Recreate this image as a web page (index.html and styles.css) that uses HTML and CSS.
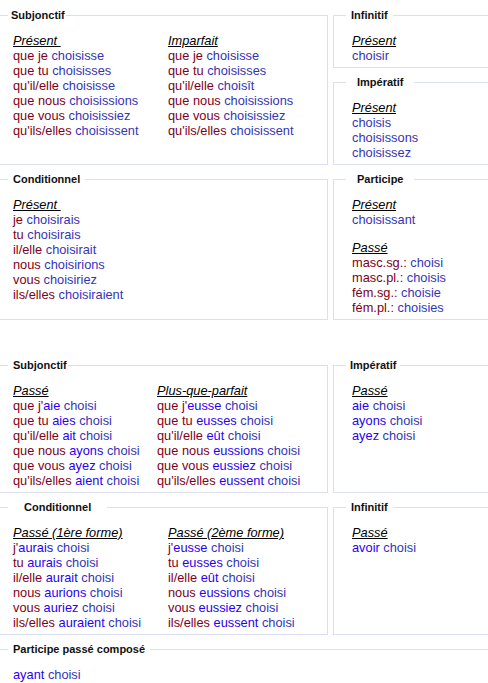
FILE: index.html
```html
<!DOCTYPE html>
<html lang="fr">
<head>
  <meta charset="UTF-8">
  <meta name="viewport" content="width=device-width, initial-scale=1.0">
  <title>Conjugaison : choisir</title>
  <link rel="stylesheet" href="styles.css">
</head>
<body>

  <!-- Temps simples -->
  <div class="block">
    <fieldset class="box box-left">
      <legend class="lg-s">Subjonctif</legend>
      <div class="cols">
        <div class="tense">
          <div class="tense-name">Présent&nbsp;</div>
          <div><span class="pr">que je</span> <span class="vb">choisisse</span></div>
          <div><span class="pr">que tu</span> <span class="vb">choisisses</span></div>
          <div><span class="pr">qu'il/elle</span> <span class="vb">choisisse</span></div>
          <div><span class="pr">que nous</span> <span class="vb">choisissions</span></div>
          <div><span class="pr">que vous</span> <span class="vb">choisissiez</span></div>
          <div><span class="pr">qu'ils/elles</span> <span class="vb">choisissent</span></div>
        </div>
        <div class="tense">
          <div class="tense-name">Imparfait</div>
          <div><span class="pr">que je</span> <span class="vb">choisisse</span></div>
          <div><span class="pr">que tu</span> <span class="vb">choisisses</span></div>
          <div><span class="pr">qu'il/elle</span> <span class="vb">choisît</span></div>
          <div><span class="pr">que nous</span> <span class="vb">choisissions</span></div>
          <div><span class="pr">que vous</span> <span class="vb">choisissiez</span></div>
          <div><span class="pr">qu'ils/elles</span> <span class="vb">choisissent</span></div>
        </div>
      </div>
    </fieldset>

    <div class="stack">
      <fieldset class="box">
        <legend class="lg-m">Infinitif</legend>
        <div class="tense-name">Présent</div>
        <div><span class="vb">choisir</span></div>
      </fieldset>
      <fieldset class="box">
        <legend class="lg-l">Impératif</legend>
        <div class="tense-name">Présent</div>
        <div><span class="vb">choisis</span></div>
        <div><span class="vb">choisissons</span></div>
        <div><span class="vb">choisissez</span></div>
      </fieldset>
    </div>

    <fieldset class="box box-left">
      <legend class="lg-m">Conditionnel</legend>
      <div class="tense-name">Présent&nbsp;</div>
      <div><span class="pr">je</span> <span class="vb">choisirais</span></div>
      <div><span class="pr">tu</span> <span class="vb">choisirais</span></div>
      <div><span class="pr">il/elle</span> <span class="vb">choisirait</span></div>
      <div><span class="pr">nous</span> <span class="vb">choisirions</span></div>
      <div><span class="pr">vous</span> <span class="vb">choisiriez</span></div>
      <div><span class="pr">ils/elles</span> <span class="vb">choisiraient</span></div>
    </fieldset>

    <fieldset class="box">
      <legend class="lg-l">Participe</legend>
      <div class="tense-name">Présent</div>
      <div><span class="vb">choisissant</span></div>
      <div class="tense-name spaced">Passé</div>
      <div><span class="pr">masc.sg.:</span> <span class="vb">choisi</span></div>
      <div><span class="pr">masc.pl.:</span> <span class="vb">choisis</span></div>
      <div><span class="pr">fém.sg.:</span> <span class="vb">choisie</span></div>
      <div><span class="pr">fém.pl.:</span> <span class="vb">choisies</span></div>
    </fieldset>
  </div>

  <!-- Temps composés -->
  <div class="block block-second">
    <fieldset class="box box-left">
      <legend class="lg-s2">Subjonctif</legend>
      <div class="cols cols-narrow">
        <div class="tense">
          <div class="tense-name">Passé</div>
          <div><span class="pr">que j'</span><span class="aux">aie</span> <span class="vb">choisi</span></div>
          <div><span class="pr">que tu</span> <span class="aux">aies</span> <span class="vb">choisi</span></div>
          <div><span class="pr">qu'il/elle</span> <span class="aux">ait</span> <span class="vb">choisi</span></div>
          <div><span class="pr">que nous</span> <span class="aux">ayons</span> <span class="vb">choisi</span></div>
          <div><span class="pr">que vous</span> <span class="aux">ayez</span> <span class="vb">choisi</span></div>
          <div><span class="pr">qu'ils/elles</span> <span class="aux">aient</span> <span class="vb">choisi</span></div>
        </div>
        <div class="tense">
          <div class="tense-name">Plus-que-parfait</div>
          <div><span class="pr">que j'</span><span class="aux">eusse</span> <span class="vb">choisi</span></div>
          <div><span class="pr">que tu</span> <span class="aux">eusses</span> <span class="vb">choisi</span></div>
          <div><span class="pr">qu'il/elle</span> <span class="aux">eût</span> <span class="vb">choisi</span></div>
          <div><span class="pr">que nous</span> <span class="aux">eussions</span> <span class="vb">choisi</span></div>
          <div><span class="pr">que vous</span> <span class="aux">eussiez</span> <span class="vb">choisi</span></div>
          <div><span class="pr">qu'ils/elles</span> <span class="aux">eussent</span> <span class="vb">choisi</span></div>
        </div>
      </div>
    </fieldset>

    <fieldset class="box">
      <legend class="lg-s3">Impératif</legend>
      <div class="tense-name">Passé</div>
      <div><span class="aux">aie</span> <span class="vb">choisi</span></div>
      <div><span class="aux">ayons</span> <span class="vb">choisi</span></div>
      <div><span class="aux">ayez</span> <span class="vb">choisi</span></div>
    </fieldset>

    <fieldset class="box box-left">
      <legend class="lg-xl">Conditionnel</legend>
      <div class="cols">
        <div class="tense">
          <div class="tense-name">Passé (1ère forme)</div>
          <div><span class="pr">j'</span><span class="aux">aurais</span> <span class="vb">choisi</span></div>
          <div><span class="pr">tu</span> <span class="aux">aurais</span> <span class="vb">choisi</span></div>
          <div><span class="pr">il/elle</span> <span class="aux">aurait</span> <span class="vb">choisi</span></div>
          <div><span class="pr">nous</span> <span class="aux">aurions</span> <span class="vb">choisi</span></div>
          <div><span class="pr">vous</span> <span class="aux">auriez</span> <span class="vb">choisi</span></div>
          <div><span class="pr">ils/elles</span> <span class="aux">auraient</span> <span class="vb">choisi</span></div>
        </div>
        <div class="tense">
          <div class="tense-name">Passé (2ème forme)</div>
          <div><span class="pr">j'</span><span class="aux">eusse</span> <span class="vb">choisi</span></div>
          <div><span class="pr">tu</span> <span class="aux">eusses</span> <span class="vb">choisi</span></div>
          <div><span class="pr">il/elle</span> <span class="aux">eût</span> <span class="vb">choisi</span></div>
          <div><span class="pr">nous</span> <span class="aux">eussions</span> <span class="vb">choisi</span></div>
          <div><span class="pr">vous</span> <span class="aux">eussiez</span> <span class="vb">choisi</span></div>
          <div><span class="pr">ils/elles</span> <span class="aux">eussent</span> <span class="vb">choisi</span></div>
        </div>
      </div>
    </fieldset>

    <fieldset class="box">
      <legend class="lg-m">Infinitif</legend>
      <div class="tense-name">Passé</div>
      <div><span class="aux">avoir</span> <span class="vb">choisi</span></div>
    </fieldset>

    <fieldset class="box box-left box-full">
      <legend class="lg-m">Participe passé composé</legend>
      <div><span class="aux">ayant</span> <span class="vb">choisi</span></div>
    </fieldset>
  </div>

</body>
</html>
```

FILE: styles.css
```css
html {
  overflow: hidden;
}
body {
  margin: 0;
  padding-top: 9px;
  font-family: "Liberation Sans", Arial, sans-serif;
  font-size: 12.8px;
  line-height: 15px;
  color: #000;
  background-color: #fff;
}
.block {
  display: grid;
  grid-template-columns: 333px 1fr;
  gap: 8px 5px;
  width: 500px;
  margin-left: -5px;
}
.block-second {
  margin-top: 39px;
}
.stack {
  display: flex;
  flex-direction: column;
  gap: 8px;
}
.box {
  margin: 0;
  min-width: 0;
  border: 1px solid #dcdff0;
  padding: 11px 12px 4px 18px;
}
.box-left {
  padding-left: 17px;
}
.box-full {
  grid-column: 1 / -1;
}
legend {
  font-weight: bold;
  font-size: 11px;
  line-height: 13px;
  color: #111;
  margin-left: -6px;
  padding: 0 5px;
}
.box-left legend {
  margin-left: -5px;
}
.lg-s {
  padding: 0 1px 0 3px;
}
.lg-s2 {
  padding: 0 1px 0 5px;
}
.lg-s3 {
  padding: 0 4px;
}
.lg-m {
  padding: 0 5px;
}
.lg-l {
  padding: 0 11px;
}
.lg-xl {
  padding: 0 16px;
}
.cols {
  display: flex;
}
.cols .tense:first-child {
  width: 155px;
  flex-shrink: 0;
}
.cols-narrow .tense:first-child {
  width: 144px;
}
.tense-name {
  font-style: italic;
  text-decoration: underline;
  color: #000;
}
.spaced {
  margin-top: 13px;
}
.pr {
  color: #800020;
}
.vb {
  color: #3535b4;
}
.aux {
  color: #2a00f2;
}
```
